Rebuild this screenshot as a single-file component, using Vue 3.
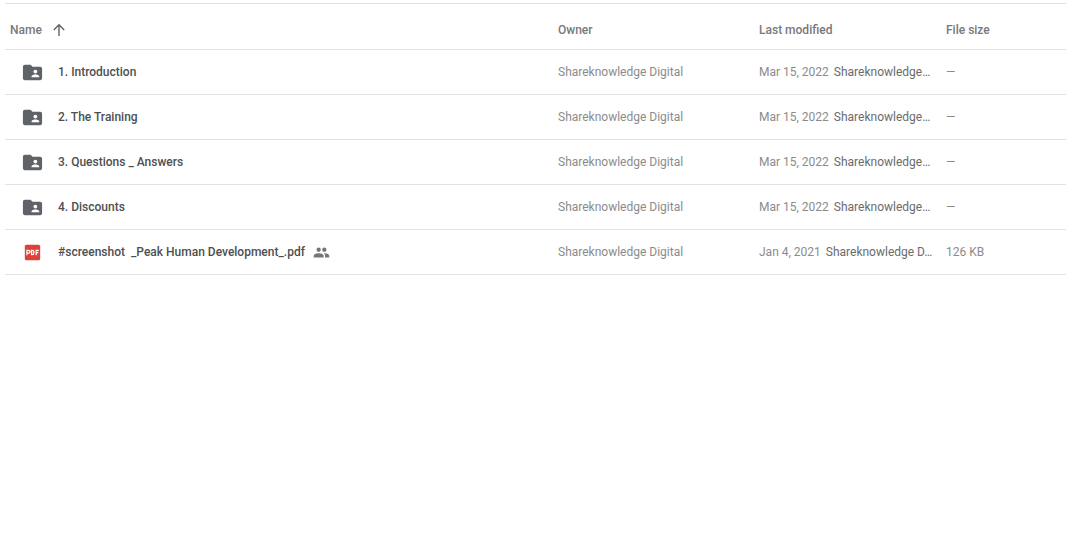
<script setup>
const rows = [
  { kind: 'folder', name: '1. Introduction', date: 'Mar 15, 2022', by: 'Shareknowledge…', size: '—' },
  { kind: 'folder', name: '2. The Training', date: 'Mar 15, 2022', by: 'Shareknowledge…', size: '—' },
  { kind: 'folder', name: '3. Questions _ Answers', date: 'Mar 15, 2022', by: 'Shareknowledge…', size: '—' },
  { kind: 'folder', name: '4. Discounts', date: 'Mar 15, 2022', by: 'Shareknowledge…', size: '—' },
  { kind: 'pdf', name: '#screenshot  _Peak Human Development_.pdf', date: 'Jan 4, 2021', by: 'Shareknowledge D…', size: '126 KB', shared: true },
]
const owner = 'Shareknowledge Digital'
</script>

<template>
  <main class="drive">
    <table class="files">
      <colgroup>
        <col class="c-name" />
        <col class="c-owner" />
        <col class="c-modified" />
        <col class="c-size" />
      </colgroup>
      <thead>
        <tr>
          <th scope="col" aria-sort="ascending">
            <button class="sort" type="button">
              <span>Name</span>
              <svg class="arrow" viewBox="0 0 18 18" aria-hidden="true">
                <path d="M9 15V4M3.8 9 9 3.8 14.2 9" />
              </svg>
            </button>
          </th>
          <th scope="col">Owner</th>
          <th scope="col">Last modified</th>
          <th scope="col">File size</th>
        </tr>
      </thead>
      <tbody>
        <tr v-for="row in rows" :key="row.name">
          <td>
            <div class="file">
              <svg v-if="row.kind === 'folder'" class="icon folder" viewBox="0 0 24 24" aria-hidden="true">
                <path d="M20 6h-8l-2-2H4c-1.1 0-1.99.9-1.99 2L2 18c0 1.1.9 2 2 2h16c1.1 0 2-.9 2-2V8c0-1.1-.9-2-2-2zm-5 3c1.1 0 2 .9 2 2s-.9 2-2 2-2-.9-2-2 .9-2 2-2zm4 8h-8v-1c0-1.33 2.67-2 4-2s4 .67 4 2v1z" />
              </svg>
              <svg v-else class="icon pdf" viewBox="0 0 24 24" aria-hidden="true">
                <rect x="4" y="4" width="16" height="16" rx="1.6" />
                <path d="M6.2 14.8V9.7H8a1.35 1.35 0 0 1 0 2.9H6.2M11 9.7v4.4h.9c1 0 1.5-.7 1.5-2.2s-.5-2.2-1.5-2.2zM15.8 14.8V9.8h2.8M15.8 12.2h2.3" />
              </svg>
              <span class="name">{{ row.name }}</span>
              <svg v-if="row.shared" class="people" viewBox="0 0 24 24" role="img" aria-label="Shared">
                <path d="M16 11c1.66 0 2.99-1.34 2.99-3S17.66 5 16 5s-3 1.34-3 3 1.34 3 3 3zm-8 0c1.66 0 2.99-1.34 2.99-3S9.66 5 8 5 5 6.34 5 8s1.34 3 3 3zm0 2c-2.33 0-7 1.17-7 3.5V19h14v-2.5c0-2.33-4.67-3.5-7-3.5zm8 0c-.29 0-.62.02-.97.05 1.16.84 1.97 1.97 1.97 3.45V19h6v-2.5c0-2.33-4.67-3.5-7-3.5z" />
              </svg>
            </div>
          </td>
          <td>{{ owner }}</td>
          <td>
            <div class="modified">
              <span>{{ row.date }}</span>
              <span class="by">{{ row.by }}</span>
            </div>
          </td>
          <td>{{ row.size }}</td>
        </tr>
      </tbody>
    </table>
  </main>
</template>

<style>
body {
  margin: 0;
  background: #fff;
}
</style>

<style scoped>
.drive {
  padding: 3px 0 0 5px;
  font-family: Roboto, sans-serif;
  font-size: 12px;
  line-height: 16px;
}
.files {
  width: 100%;
  table-layout: fixed;
  border-collapse: separate;
  border-spacing: 0;
  border-top: 1px solid #e2e2e2;
}
.c-owner {
  width: 201px;
}
.c-modified {
  width: 187px;
}
.c-size {
  width: 121px;
}
th,
td {
  padding: 0;
  text-align: left;
  white-space: nowrap;
  border-bottom: 1px solid #e2e2e2;
}
th {
  height: 38px;
  padding: 7px 0 0 1px;
  font-weight: 500;
  color: #77797c;
}
th:first-child {
  padding-left: 5px;
}
td {
  height: 44px;
  padding-left: 1px;
  color: #8b8b8b;
}
td:first-child {
  padding-left: 0;
}
.sort {
  display: flex;
  align-items: center;
  gap: 8px;
  padding: 0;
  border: 0;
  background: none;
  font: inherit;
  color: inherit;
  cursor: pointer;
}
.arrow {
  width: 18px;
  height: 18px;
  fill: none;
  stroke: #5f6368;
  stroke-width: 1.4;
}
.file {
  display: flex;
  align-items: center;
  padding-left: 16px;
}
.icon {
  width: 23px;
  height: 23px;
  margin-right: 14px;
}
.folder {
  fill: #5f6368;
}
.pdf rect {
  fill: #dc4338;
}
.pdf path {
  fill: none;
  stroke: #fff;
  stroke-width: 1.3;
}
.name {
  font-weight: 500;
  color: #4d4f51;
  white-space: pre;
}
.people {
  width: 17px;
  height: 17px;
  margin-left: 8px;
  fill: #757575;
}
.modified {
  display: flex;
  gap: 5px;
}
.by {
  color: #6b6b6b;
}
</style>
